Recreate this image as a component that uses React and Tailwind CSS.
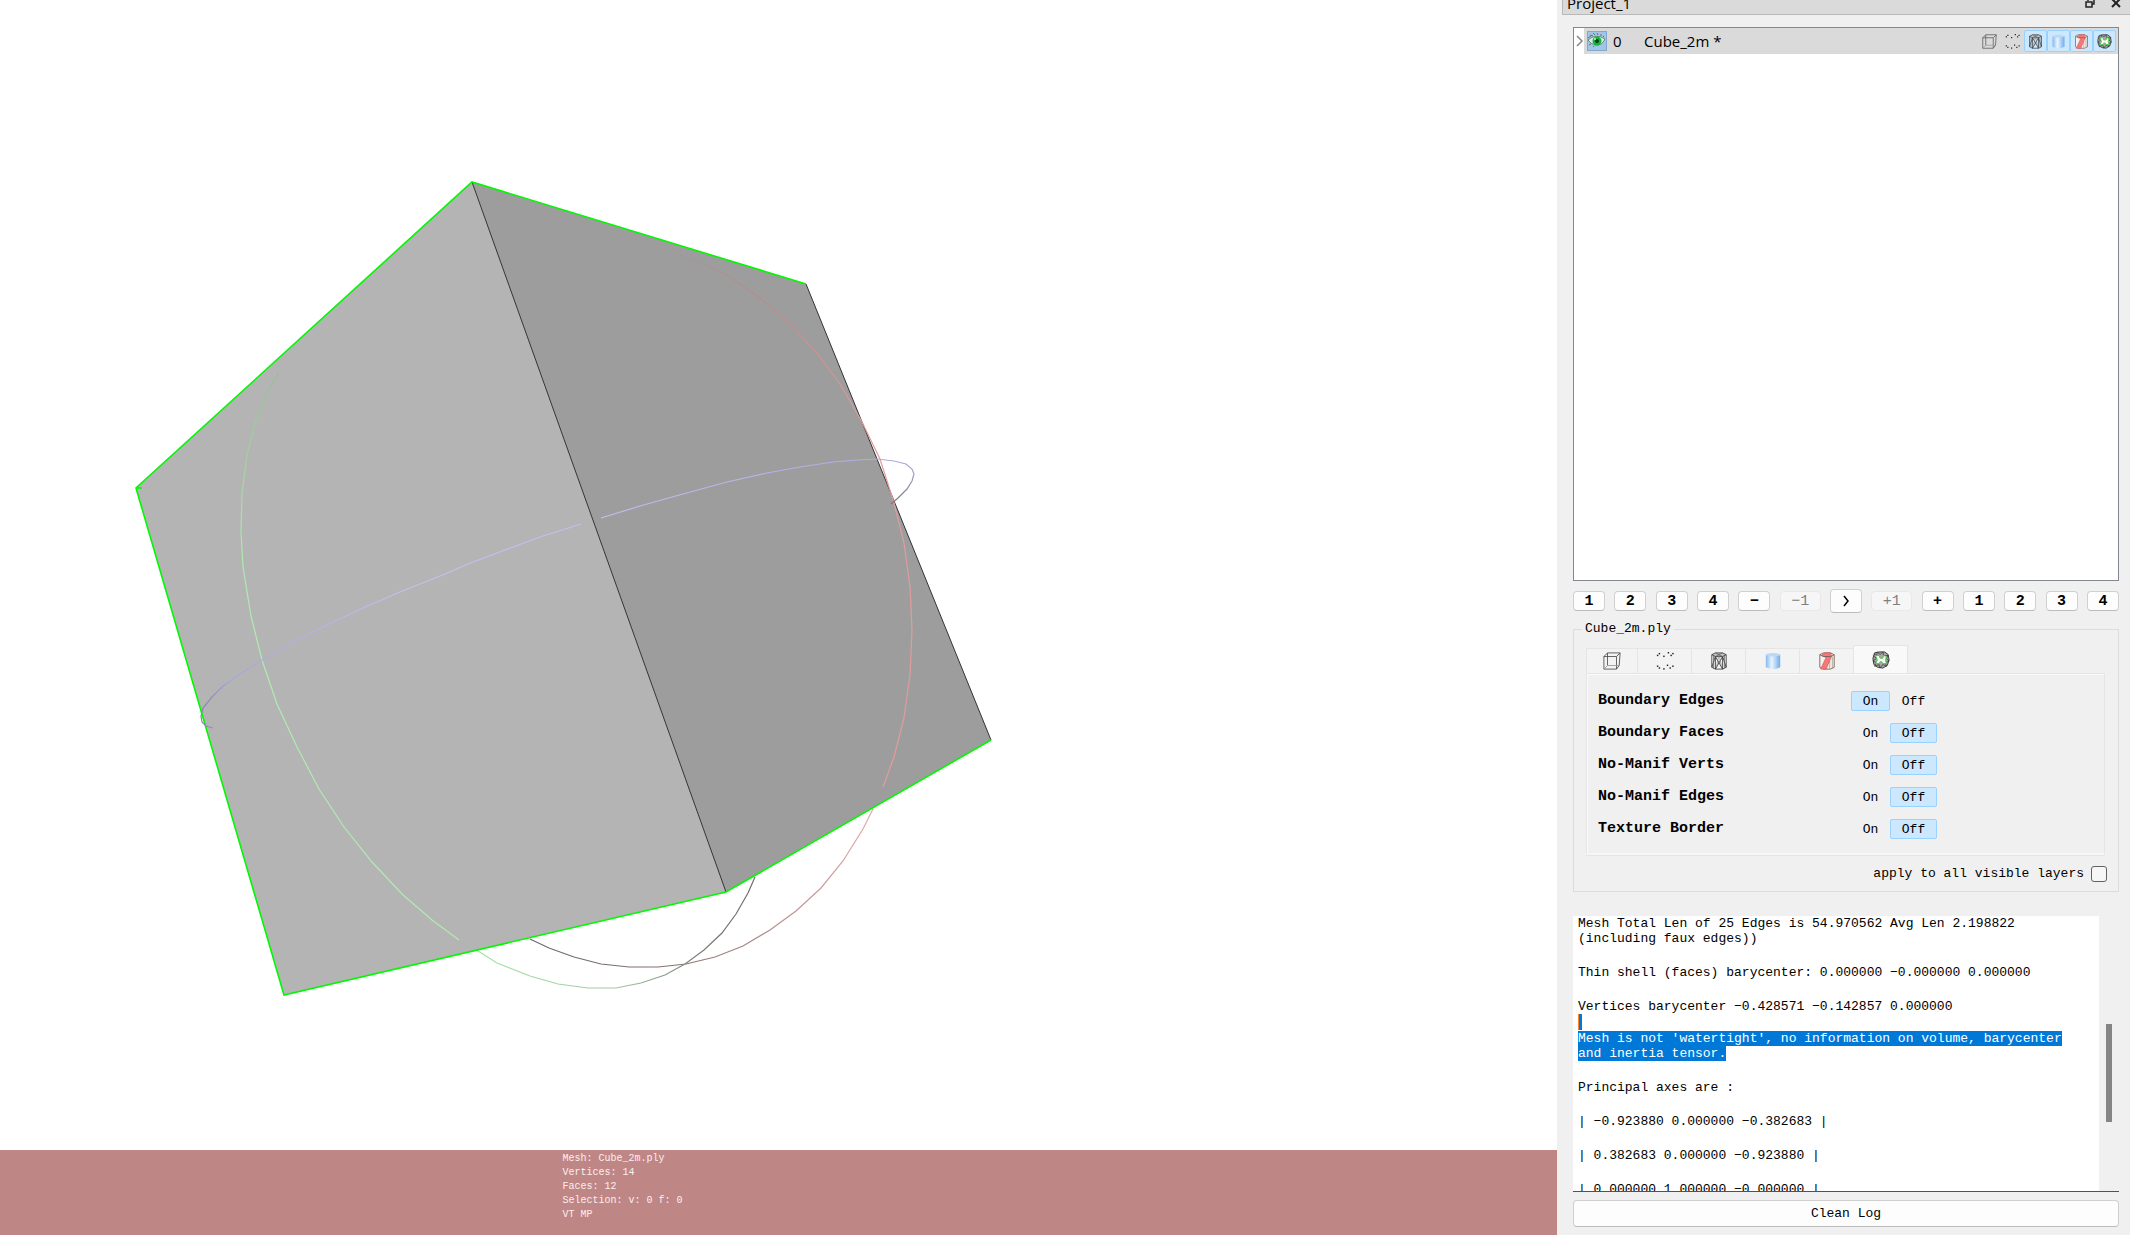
import React, { useState } from "react";

function CubeIcon({ className }) {
  return (
    <svg viewBox="0 0 20 20" className={className} fill="none" stroke="#555" strokeWidth="1" aria-hidden="true">
      <path d="M1 5H15V19H1Z" />
      <path d="M5 15V1H19L18 15L15 19M1 5L5 1M15 5L19 1" />
      <path d="M5 15H18M1 19L5 15" stroke="#999" />
    </svg>
  );
}

function PointsIcon({ className }) {
  const dots = [
    [1, 4], [3, 2], [8, 5], [13, 1], [16, 4], [18, 2],
    [1, 16], [3, 18], [8, 19], [12, 15], [15, 18], [18, 16],
  ];
  return (
    <svg viewBox="0 0 20 20" className={className} aria-hidden="true">
      {dots.map(([x, y]) => (
        <rect key={x + "-" + y} x={x} y={y - 1} width="1.6" height="1.6" fill="#222" />
      ))}
    </svg>
  );
}

function WireIcon({ className }) {
  return (
    <svg viewBox="0 0 20 20" className={className} fill="none" stroke="#333" strokeWidth="0.9" aria-hidden="true">
      <path d="M2 3L6 1H14L18 3L14 5H6Z" fill="#c4c4c4" />
      <path d="M2 3V17L6 19H14L18 17V3" />
      <path d="M6 5V19M14 5V19" />
      <path d="M6 5L2 17M6 5L14 19M14 5L6 19M14 5L18 17" />
      <path d="M6 1L14 5M14 1L6 5M4 4V18M16 4V18" stroke="#666" />
      <path d="M10 2L7 18M10 2L13 18" stroke="#777" strokeWidth="0.7" />
    </svg>
  );
}

function CylinderIcon({ className, id }) {
  return (
    <svg viewBox="0 0 20 20" className={className} aria-hidden="true">
      <defs>
        <linearGradient id={id}>
          <stop offset="0" stopColor="#84b8f0" />
          <stop offset="0.4" stopColor="#e9f3fd" />
          <stop offset="0.55" stopColor="#cfe4fb" />
          <stop offset="1" stopColor="#6fabea" />
        </linearGradient>
      </defs>
      <path d="M2 3V17Q10 21 18 17V3Z" fill={`url(#${id})`} />
      <ellipse cx="10" cy="3" rx="8" ry="2" fill="#bcd8f7" />
    </svg>
  );
}

function RedFacesIcon({ className }) {
  return (
    <svg viewBox="0 0 20 20" className={className} fill="none" strokeWidth="1" aria-hidden="true">
      <path d="M2 3V17L6 19H14L18 17V3L14 1H6Z" fill="#f4f0ec" stroke="#776458" />
      <path d="M13 10V19M16 5V18" stroke="#a3968b" strokeWidth="0.8" />
      <path d="M4 4L7 1H14L15 5L9 19H3L9 6Z" fill="#f87878" stroke="#cf5050" strokeWidth="0.7" />
      <path d="M2 3L6 5H14L18 3" stroke="#555" strokeWidth="0.8" />
    </svg>
  );
}

function BorderIcon({ className }) {
  return (
    <svg viewBox="0 0 20 20" className={className} fill="none" aria-hidden="true">
      <path d="M3 2L8 1L14 1L18 4L19 10L17 16L12 19L6 18L2 15L1 8Z" fill="#a6a6a6" stroke="#333" strokeWidth="1" />
      <path d="M1 5L5 8L1 11L5 13L3 17L8 15L9 19L12 15L16 17L15 13L19 11L16 8L18 5L13 5L12 1L9 4L6 1L5 5L2 3" stroke="#333" strokeWidth="0.8" />
      <path d="M4 5L8 5L9 8H12L13 5L16 6L15 10L16 14L12 14L11 12H9L8 14L4 14L6 10Z" fill="#f4fff4" stroke="#53c653" strokeWidth="1.1" />
    </svg>
  );
}

function EyeIcon() {
  return (
    <svg viewBox="0 0 20 20" className="size-5 shrink-0" aria-label="Visible">
      <rect x="0.5" y="0.5" width="19" height="19" fill="#a3c5e5" stroke="#7fa9cf" />
      <path d="M1 9Q9 2 18 8Q15 15 8 14Q4 13 1 9Z" fill="#d7eee3" stroke="#537568" strokeWidth="0.8" />
      <circle cx="10" cy="10" r="4.500" fill="#12b53a" />
      <circle cx="10" cy="10" r="2" fill="#083c16" />
      <circle cx="8" cy="8" r="1" fill="#b9ffd0" />
      <path d="M1 7L4 5M3 4L6 5M6 2L8 4M10 2L11 4M14 3L14 5M17 5L16 6M4 13L2 14M7 15L6 16" stroke="#41665a" strokeWidth="0.8" />
    </svg>
  );
}

const redArc =
  "M672 252L693 260L727 275L760 298L788 322L817 353L840 384L862 422L880 459L894 503L904 543L910 587L912 630L910 675L904 718L894 757L883 787";
const redLowerArc =
  "M873 809L863 829L843 861L821 888L796 911L770 930L743 946L715 957L686 964L658 967L629 967L601 964L574 957L549 948L530 939";
const greenArc =
  "M279 372L267 392L255 423L247 455L242 493L241 532L243 567L251 616L262 660L277 704L297 747L319 789L344 827L372 862L402 894L432 920L459 940";
const greenLowerArc =
  "M475 949L497 963L530 976L558 984L588 988L616 988L641 983L665 975L685 964L704 950L722 933L736 914L748 893L755 877";
const blueArcLeft =
  "M213 728L206 726L202 722L201 716L203 708L212 697L222 687L240 674L262 660L293 642L327 625L363 608L400 592L440 576L473 562L513 547L543 536L581 524";
const blueArcFront = "M601 518L640 506L683 494L727 482L767 473L800 467L833 462L858 460L877 459";
const blueArcRight = "M877 459L894 461L906 464L912 469L914 474L912 481L907 489L898 498L891 504";

function Scene() {
  return (
    <svg viewBox="0 0 1557 1150" className="block min-h-0 w-full flex-1 bg-white" fill="none" role="img" aria-label="Cube mesh">
      <defs>
        <linearGradient id="redTop" gradientUnits="userSpaceOnUse" x1="672" y1="252" x2="870" y2="430">
          <stop offset="0" stopColor="#9f9a9a" />
          <stop offset="0.35" stopColor="#ba8a8a" />
          <stop offset="1" stopColor="#e09c9c" />
        </linearGradient>
        <linearGradient id="redLow" gradientUnits="userSpaceOnUse" x1="530" y1="0" x2="873" y2="0">
          <stop offset="0" stopColor="#6a6a6a" />
          <stop offset="0.4" stopColor="#857070" />
          <stop offset="1" stopColor="#e2aaaa" />
        </linearGradient>
        <linearGradient id="greenTop" gradientUnits="userSpaceOnUse" x1="0" y1="372" x2="0" y2="560">
          <stop offset="0" stopColor="#96bd96" />
          <stop offset="1" stopColor="#b0eab0" />
        </linearGradient>
        <linearGradient id="greenLow" gradientUnits="userSpaceOnUse" x1="475" y1="0" x2="755" y2="0">
          <stop offset="0" stopColor="#a4e4a4" />
          <stop offset="0.5" stopColor="#a3c8a3" />
          <stop offset="0.8" stopColor="#768076" />
          <stop offset="1" stopColor="#6c6c6c" />
        </linearGradient>
        <linearGradient id="blueLeft" gradientUnits="userSpaceOnUse" x1="201" y1="0" x2="400" y2="0">
          <stop offset="0" stopColor="#8585a5" />
          <stop offset="0.15" stopColor="#a6a6dc" />
          <stop offset="1" stopColor="#c0c0ee" />
        </linearGradient>
        <linearGradient id="blueFront" gradientUnits="userSpaceOnUse" x1="601" y1="0" x2="877" y2="0">
          <stop offset="0" stopColor="#bebeee" />
          <stop offset="1" stopColor="#acace4" />
        </linearGradient>
        <linearGradient id="blueRight" gradientUnits="userSpaceOnUse" x1="0" y1="459" x2="0" y2="504">
          <stop offset="0" stopColor="#acace4" />
          <stop offset="0.4" stopColor="#9c9cc4" />
          <stop offset="1" stopColor="#777" />
        </linearGradient>
      </defs>
      <path d={redLowerArc} stroke="url(#redLow)" strokeWidth="1.2" />
      <path d={greenLowerArc} stroke="url(#greenLow)" strokeWidth="1.2" />
      <path d="M472 182L136 488L284 995L726 892Z" fill="#b4b4b4" />
      <path d="M472 182L806 284L991 740L726 892Z" fill="#9d9d9d" />
      <path d="M472 182L726 892M806 284L991 740" stroke="#333" strokeWidth="1" />
      <path d="M806 284L472 182L136 488L284 995L726 892L991 740M136 488H142" stroke="#00f800" strokeWidth="1.600" />
      <path d={greenArc} stroke="url(#greenTop)" strokeWidth="1.2" />
      <path d={redArc} stroke="url(#redTop)" strokeWidth="1.2" />
      <path d={blueArcLeft} stroke="url(#blueLeft)" strokeWidth="1.2" />
      <path d={blueArcFront} stroke="url(#blueFront)" strokeWidth="1.2" />
      <path d={blueArcRight} stroke="url(#blueRight)" strokeWidth="1.2" />
    </svg>
  );
}

const renderIcons = [
  { name: "Bounding box", draw: (c) => <CubeIcon className={c} />, on: false },
  { name: "Points", draw: (c) => <PointsIcon className={c} />, on: false },
  { name: "Wireframe", draw: (c) => <WireIcon className={c} />, on: true },
  { name: "Solid", draw: (c, id) => <CylinderIcon className={c} id={id} />, on: true },
  { name: "Selection", draw: (c) => <RedFacesIcon className={c} />, on: true },
  { name: "Decorators", draw: (c) => <BorderIcon className={c} />, on: true },
];

const viewButtons = ["1", "2", "3", "4", "-", "-1", ">", "+1", "+", "1", "2", "3", "4"];

function ViewButton({ label }) {
  if (label === "-1" || label === "+1") {
    return (
      <button disabled className="h-5 w-[41px] rounded border border-[#e8e8e8] bg-[#f6f6f6] text-[15px] leading-none text-[#808080]">
        {label.replace("-", "−")}
      </button>
    );
  }
  if (label === ">") {
    return (
      <button aria-label="Next" className="flex h-6 w-8 items-center justify-center rounded border border-[#d0d0d0] border-b-[#bcbcbc] bg-[#fdfdfd]">
        <svg viewBox="0 0 10 12" className="h-3 w-2.5" fill="none" stroke="#000" strokeWidth="1.500" aria-hidden="true">
          <path d="M3 1L7 6L3 11" />
        </svg>
      </button>
    );
  }
  return (
    <button className="h-5 w-8 rounded border border-[#d0d0d0] border-b-[#bcbcbc] bg-[#fdfdfd] text-[15px] leading-none font-bold">
      {label.replace("-", "−")}
    </button>
  );
}

function Toggle({ label, value, onChange }) {
  const selected = "border-[#99d1ff] bg-[#cce8ff]";
  const plain = "border-transparent";
  return (
    <div className="flex h-8 items-center" role="group" aria-label={label}>
      <span className="w-[253px] text-[15px] font-bold">{label}</span>
      <button aria-pressed={value} onClick={() => onChange(true)} className={`h-5 w-[39px] rounded-xs border text-[13px] leading-none ${value ? selected : plain}`}>
        On
      </button>
      <button aria-pressed={!value} onClick={() => onChange(false)} className={`h-5 w-[47px] rounded-xs border text-[13px] leading-none ${value ? plain : selected}`}>
        Off
      </button>
    </div>
  );
}

function tabClass(i) {
  if (i === 5) return "flex h-7 w-[55px] items-center justify-center border border-b-0 border-[#e5e5e5] bg-[#f9f9f9]";
  if (i === 0) return "flex h-[25px] w-[51px] items-center justify-center border border-r-0 border-b-0 border-[#e5e5e5] bg-[#f3f3f3]";
  return "flex h-[25px] w-[54px] items-center justify-center border border-r-0 border-b-0 border-[#e5e5e5] bg-[#f3f3f3]";
}

function Decorators() {
  const [values, setValues] = useState({
    "Boundary Edges": true,
    "Boundary Faces": false,
    "No-Manif Verts": false,
    "No-Manif Edges": false,
    "Texture Border": false,
  });
  return (
    <fieldset className="mt-2 min-w-0 border border-[#dcdcdc] pr-[11px] pb-[9px] pl-3">
      <legend className="-ml-1 px-[3px] text-[13px] leading-4">Cube_2m.ply</legend>
      <div role="tablist" className="mt-2 flex items-end">
        {renderIcons.map((icon, i) => (
          <button key={icon.name} role="tab" aria-label={icon.name} aria-selected={i === 5} className={tabClass(i)}>
            {icon.draw("size-[18px]", "tabCylinder")}
          </button>
        ))}
      </div>
      <div role="tabpanel" className="mr-0.5 border border-b-2 border-[#e5e5e5] border-b-[#f6f6f6] pt-[11px] pb-2 pl-[11px] shadow-[inset_1px_1px_0_#fafafa,0_1px_0_#e5e5e5]">
        {Object.keys(values).map((name) => (
          <Toggle key={name} label={name} value={values[name]} onChange={(v) => setValues({ ...values, [name]: v })} />
        ))}
      </div>
      <label className="mt-[11px] flex items-center justify-end gap-[7px] text-[13px] leading-4">
        apply to all visible layers
        <input type="checkbox" className="size-4 appearance-none rounded-[3px] border border-[#626262] bg-[#f6f6f6]" />
      </label>
    </fieldset>
  );
}

function Log() {
  return (
    <div className="mt-6 flex h-[276px] shrink-0 border-b border-[#0067c0] bg-white">
      <div className="flex-1 space-y-[19px] overflow-hidden pl-[5px] text-[13px] leading-[15px]">
        <p>
          Mesh Total Len of 25 Edges is 54.970562 Avg Len 2.198822
          <br />
          (including faux edges))
        </p>
        <p>Thin shell (faces) barycenter: 0.000000 −0.000000 0.000000</p>
        <div>
          <p>Vertices barycenter −0.428571 −0.142857 0.000000</p>
          <div className="mb-px h-4 w-1 border-l border-[#ff8728] bg-[#0078d7]" />
          <p>
            <span className="bg-[#0078d7] text-white">
              Mesh is not 'watertight', no information on volume, barycenter
              <br />
              and inertia tensor.
            </span>
          </p>
        </div>
        <p>Principal axes are :</p>
        <p>| −0.923880 0.000000 −0.382683 |</p>
        <p>| 0.382683 0.000000 −0.923880 |</p>
        <p>| 0.000000 1.000000 −0.000000 |</p>
      </div>
      <div className="flex w-5 flex-col bg-[#f0f0f0] pt-[108px] pl-[7px]">
        <div className="h-[98px] w-1.5 bg-[#858585]" />
      </div>
    </div>
  );
}

export default function App() {
  return (
    <div className="flex h-screen overflow-hidden bg-[#f0f0f0] font-['Liberation_Mono',monospace] text-black">
      <main className="flex min-w-0 flex-1 flex-col">
        <Scene />
        <div className="h-[85px] shrink-0 bg-[#bf8686] pt-0.5 pl-[calc(36%+2px)] text-[10px] leading-[14px] text-[#fbefef]">
          <p>Mesh: Cube_2m.ply</p>
          <p>Vertices: 14</p>
          <p>Faces: 12</p>
          <p>Selection: v: 0 f: 0</p>
          <p>VT MP</p>
        </div>
      </main>

      <aside className="flex w-[573px] shrink-0 flex-col pl-[5px]">
        <header className="flex h-[15px] shrink-0 items-end justify-between border-b border-l border-[#b8b8b8] bg-[#dadada] pr-[9px] pl-1">
          <h1 className="font-['Open_Sans',sans-serif] text-[15px] leading-[22px]">Project_1</h1>
          <div className="flex gap-4 pb-1.5">
            <button aria-label="Float">
              <svg viewBox="0 0 10 10" className="size-2.5" fill="none" stroke="#222" strokeWidth="1.500" aria-hidden="true">
                <path d="M3 3V1H9V6H7M1 4H7V9H1Z" />
              </svg>
            </button>
            <button aria-label="Close">
              <svg viewBox="0 0 10 10" className="size-2.5" fill="none" stroke="#222" strokeWidth="2" aria-hidden="true">
                <path d="M1 1L9 9M9 1L1 9" />
              </svg>
            </button>
          </div>
        </header>

        <div className="mt-3 mr-[11px] mb-2 ml-[11px] flex min-h-0 flex-1 flex-col">
          <ul className="min-h-0 flex-1 border border-[#828790] bg-white">
            <li className="flex h-[26px] items-center font-['Open_Sans',sans-serif] text-[15px]">
              <svg viewBox="0 0 10 12" className="h-3 w-2.5 shrink-0" fill="none" stroke="#888" strokeWidth="1.500" aria-hidden="true">
                <path d="M3 1L8 6L3 11" />
              </svg>
              <div className="flex h-full flex-1 items-center bg-[#dadada] pr-0.5 pl-[3px]">
                <EyeIcon />
                <span className="ml-1.5 w-[31px]">0</span>
                <span className="flex-1">Cube_2m *</span>
                {renderIcons.map((icon) => (
                  <button
                    key={icon.name}
                    aria-label={icon.name}
                    aria-pressed={icon.on}
                    className={
                      icon.on
                        ? "flex h-[22px] w-[23px] items-center justify-center rounded-xs border border-[#99d1ff] bg-[#cce8ff]"
                        : "flex h-[22px] w-[23px] items-center justify-center"
                    }
                  >
                    {icon.draw("size-[15px]", "rowCylinder")}
                  </button>
                ))}
              </div>
            </li>
          </ul>

          <div className="mt-2 flex items-center justify-between">
            {viewButtons.map((label, i) => (
              <ViewButton key={i} label={label} />
            ))}
          </div>

          <Decorators />
          <Log />

          <button className="mt-2 h-[27px] shrink-0 rounded border border-[#d0d0d0] border-b-[#bcbcbc] bg-[#fdfdfd] text-[13px]">
            Clean Log
          </button>
        </div>
      </aside>
    </div>
  );
}
